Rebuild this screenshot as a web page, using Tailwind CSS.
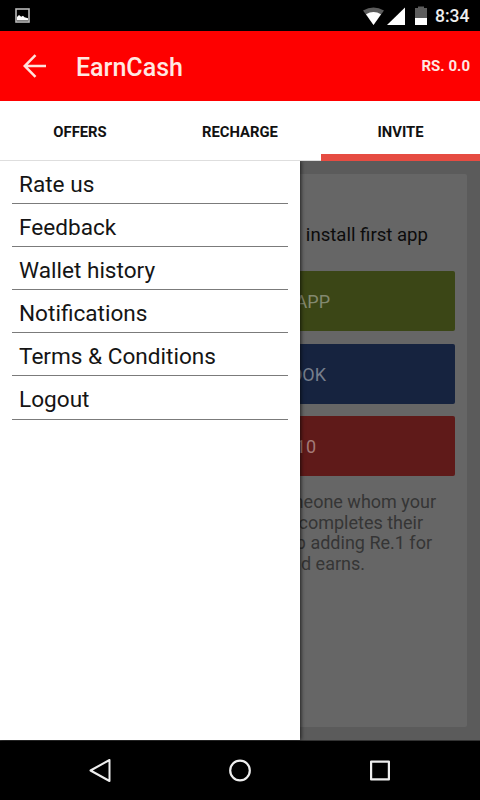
<!DOCTYPE html>
<html lang="en">
<head>
<meta charset="utf-8">
<title>EarnCash</title>
<script src="https://cdn.jsdelivr.net/npm/@tailwindcss/browser@4"></script>
</head>
<body class="w-[480px] h-[800px] overflow-hidden bg-black font-[Roboto,sans-serif] flex flex-col">
  <div class="h-[31px] shrink-0 flex items-center bg-black">
    <svg class="ml-[15px] w-[15px] h-[15px]" viewBox="0 0 15 15"><rect x="1" y="1" width="13" height="13" fill="none" stroke="#b9b9b9" stroke-width="1.6"/><path d="M2 12.500V9l2-2 2.200 1.800 1.800-1 1.500 1.400 3.500 1v2.300z" fill="#fff"/></svg>
    <svg class="ml-auto w-[66px] h-[20px]" viewBox="0 0 66 20"><path d="M0 4.500Q10.500 -1.500 21 4.500L10.500 19z" fill="#5c5c5c"/><path d="M3 8.200Q10.500 3.800 18 8.200L10.500 19z" fill="#fff"/><path d="M42 1.500V19H24z" fill="#fff"/><path d="M52 2h3V.500h6V2h3v10H52z" fill="#5c5c5c"/><path d="M52 12h12v7H52z" fill="#fff"/></svg>
    <span class="ml-[6px] mr-[10px] w-[35px] text-[17.5px] leading-none font-medium text-[#eee] whitespace-nowrap mt-[2px]">8:34</span>
  </div>
  <header class="h-[70px] shrink-0 bg-[#fe0000] flex items-center text-[#ffe8e2]">
    <svg class="ml-[23px] w-[24px] h-[24px]" viewBox="0 0 24 24" fill="none" stroke="#ffe3dc" stroke-width="2.5"><path d="M23 12H2M12.500 1.200L1.700 12l10.800 10.800"/></svg>
    <h1 class="ml-[29px] text-[25px] leading-none font-medium mt-[3px] whitespace-nowrap">EarnCash</h1>
    <span class="ml-auto mr-[10px] text-[15px] leading-none font-bold whitespace-nowrap mt-[1px]">RS. 0.0</span>
  </header>
  <nav class="relative z-20 h-[60px] shrink-0 bg-white grid grid-cols-3 text-[14.8px] font-bold text-[#111] text-center leading-[63px] border-b border-[#dedede]">
    <span>OFFERS</span><span>RECHARGE</span>
    <span class="h-[60px] ml-[1px] border-b-[7px] border-[#e64c42]">INVITE</span>
  </nav>
  <main class="h-[579px] shrink-0 flex bg-[#5b5b5b]">
    <aside class="w-[300px] shrink-0 bg-white px-[12px] shadow-[1px_0_4px_rgba(0,0,0,0.7)] z-10">
      <ul class="text-[22.6px] leading-[48px] text-[#151515]">
        <li class="h-[43px] pl-[7px] border-b border-[#7b7b7b]">Rate us</li>
        <li class="h-[43px] pl-[7px] border-b border-[#7b7b7b]">Feedback</li>
        <li class="h-[43px] pl-[7px] border-b border-[#7b7b7b]">Wallet history</li>
        <li class="h-[43px] pl-[7px] border-b border-[#7b7b7b]">Notifications</li>
        <li class="h-[43px] pl-[7px] border-b border-[#7b7b7b]">Terms &amp; Conditions</li>
        <li class="h-[44px] pl-[7px] border-b border-[#7b7b7b]">Logout</li>
      </ul>
    </aside>
    <section class="w-[180px] pt-[13px] pb-[13px] pr-[13px] overflow-hidden">
      <div class="h-full bg-[#666] pr-[12px] rounded-r-[2px]">
        <p class="h-[97px] pt-[50px] pr-[27px] flex justify-end text-[18.600px] leading-[22px] text-[#0c0c0c] whitespace-nowrap">install first app</p>
        <div class="h-[60px] rounded-r-[2px] bg-[#3b4616] text-[#83896f] text-[18px] leading-[62px] flex"><span class="w-[30px] flex justify-end whitespace-nowrap">WHATSAPP</span></div>
        <div class="h-[60px] mt-[13px] rounded-r-[2px] bg-[#16233f] text-[#767e8c] text-[18px] leading-[62px] flex"><span class="w-[26px] flex justify-end whitespace-nowrap">FACEBOOK</span></div>
        <div class="h-[60px] mt-[12px] rounded-r-[2px] bg-[#5f1a19] text-[#a37b78] text-[18px] leading-[62px] flex"><span class="w-[16px] flex justify-end whitespace-nowrap">10</span></div>
        <div class="mt-[16px] text-[18px] leading-[20.700px] text-[#353535] whitespace-nowrap">
          <p class="w-[136px] flex justify-end">someone whom your</p>
          <p class="w-[123px] flex justify-end">completes their</p>
          <p class="w-[132px] flex justify-end">app adding Re.1 for</p>
          <p class="w-[65px] flex justify-end">and earns.</p>
        </div>
      </div>
    </section>
  </main>
  <footer class="h-[60px] shrink-0 bg-black border-t border-[#333] flex items-center justify-center gap-[116px]">
    <svg class="w-[24px] h-[24px]" viewBox="0 0 24 24" fill="none" stroke="#eee" stroke-width="2" stroke-linejoin="round"><path d="M21.500 1v21L2.500 11.500z"/></svg>
    <svg class="w-[24px] h-[24px]" viewBox="0 0 24 24" fill="none" stroke="#eee" stroke-width="2.200"><circle cx="12" cy="11.500" r="9.800"/></svg>
    <svg class="w-[24px] h-[24px]" viewBox="0 0 24 24" fill="none" stroke="#eee" stroke-width="2.200" stroke-linejoin="round"><rect x="3.100" y="2.600" width="17.800" height="17.800"/></svg>
  </footer>
</body>
</html>
